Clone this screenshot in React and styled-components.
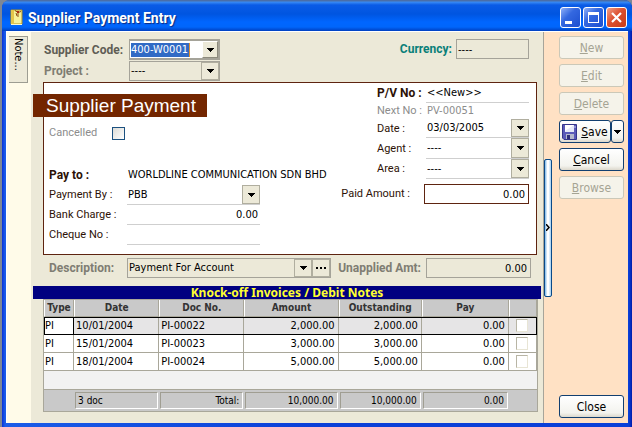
import React, { useState } from "react";
import styled, { createGlobalStyle } from "styled-components";

const GlobalStyle = createGlobalStyle`
  * {
    box-sizing: border-box;
  }
  body {
    margin: 0;
    background: #7d8796;
    font-family: "DejaVu Sans Condensed", "DejaVu Sans", sans-serif;
    font-size: 11px;
    line-height: 14px;
    color: #000;
  }
  input, select, button, output {
    font: inherit;
    color: inherit;
  }
`;

const Window = styled.div`
  display: flex;
  flex-direction: column;
  min-height: 100vh;
  margin-left: 2px;
  padding: 0 4px 4px;
  border-radius: 8px 8px 0 0;
  background: linear-gradient(90deg, #0831d9 0, #1a5ce8 3px, #0a3fd8 50%, #0a3fd8 calc(100% - 3px), #0019a8 100%);
`;

const TitleBar = styled.header`
  display: flex;
  align-items: center;
  height: 31px;
  margin: 0 -4px;
  padding: 4px 5px 0 8px;
  border-radius: 8px 8px 0 0;
  background: linear-gradient(#4a6ea8 0, #4a6ea8 1px, #3a8cf5 2px, #0a5be6 5px, #0055e0 14px, #0066ff 22px, #0066fb 27px, #0040c0 31px);
`;

const Title = styled.h1`
  flex: 1;
  margin: 0 0 0 5px;
  font-family: Roboto, sans-serif;
  font-size: 14px;
  font-weight: bold;
  line-height: 16px;
  color: #fff;
  text-shadow: 1px 1px 1px #0a2a80;
`;

const Caption = styled.button`
  display: flex;
  width: 21px;
  height: 21px;
  margin-left: 2px;
  padding: 0;
  border: 1px solid #fff;
  border-radius: 3px;
  background: ${(props) =>
    props.$close
      ? "linear-gradient(135deg, #f0a088, #dd5030 45%, #c83c18)"
      : "linear-gradient(135deg, #8fb0f8, #3468e0 40%, #1c4fd0)"};
`;

const Body = styled.div`
  display: flex;
  flex: 1;
  border-top: 1px solid #fff;
  border-left: 1px solid #fff;
  background: #ece9d8;
`;

const NoteStrip = styled.nav`
  width: 24px;
  padding: 4px 3px 0 2px;
  background: #fffbe9;
`;

const NoteTab = styled.button`
  display: block;
  width: 19px;
  height: 47px;
  padding: 1px 0 0;
  border: 1px solid #9d9d92;
  border-left: 0;
  background: #ece9d8;
  text-align: left;
  writing-mode: vertical-rl;
`;

const Main = styled.main`
  flex: 1;
  min-width: 0;
  border-right: 1px solid #a7a59a;
`;

const TopArea = styled.section`
  display: flex;
  justify-content: space-between;
  align-items: flex-start;
  padding: 7px 14px 1px 13px;
`;

const TopGrid = styled.div`
  display: grid;
  grid-template-columns: 85px 91px;
  row-gap: 1px;
  align-items: center;
`;

const Heading = styled.label`
  font-family: Roboto, sans-serif;
  font-size: 12px;
  font-weight: bold;
  color: ${(props) => props.$color || "#7f7d73"};
  white-space: nowrap;
`;

const Label = styled.label`
  font-family: Roboto, sans-serif;
  font-size: ${(props) => (props.$bold ? "12px" : "11px")};
  font-weight: ${(props) => (props.$bold ? "bold" : "normal")};
  color: ${(props) => (props.$muted ? "#8c8c8c" : "#2d1206")};
  white-space: nowrap;
`;

const Combo = styled.div`
  display: grid;
  grid-template-columns: 1fr auto;
  height: ${(props) => (props.$line ? "100%" : "20px")};
  border: ${(props) => (props.$line ? "0" : "1px solid #a5a399")};
  border-bottom: ${(props) => props.$line && "1px solid #cfcfcf"};
  background: ${(props) => (props.$line ? "#fff" : "#ece9d8")};
`;

const CodeCombo = styled.div`
  display: flex;
  justify-content: space-between;
  align-items: center;
  height: 21px;
  padding-left: 1px;
  border: 2px solid #a5a399;
  border-left-width: 1px;
  background: #fff;
`;

const CodeInput = styled.input`
  width: 59px;
  height: 14px;
  padding: 0;
  border: 0;
  border-right: 1px solid #e09030;
  outline: 0;
  background: #316ac5;
  color: #fff;
`;

const Select = styled.select`
  grid-area: 1 / 1 / 2 / 3;
  min-width: 0;
  padding: 0 0 0 1px;
  border: 0;
  outline: 0;
  background: transparent;
  appearance: none;
`;

const ArrowBox = styled.span`
  grid-area: 1 / 2 / 2 / 3;
  display: flex;
  align-items: center;
  justify-content: center;
  width: 18px;
  border: 1px solid #b0ae9f;
  background: #ece9d8;
  pointer-events: none;
`;

const ArrowButton = styled.button`
  display: flex;
  align-items: center;
  justify-content: center;
  width: 16px;
  height: 17px;
  padding: 0;
  border: 1px solid;
  border-color: #fff #8d8b7e #8d8b7e #fff;
  background: #ece9d8;
`;

const Boxed = styled.input`
  width: ${(props) => props.$width || "105px"};
  height: 20px;
  padding: 0 3px 0 1px;
  border: 1px solid ${(props) => (props.$accent ? "#5e2410" : "#a5a399")};
  outline: 0;
  background: ${(props) => (props.$accent ? "#fff" : "#ece9d8")};
  text-align: ${(props) => props.$align || "right"};
`;

const Underlined = styled.input`
  width: 100%;
  min-width: 0;
  height: 100%;
  padding: 0 2px 0 1px;
  border: 0;
  border-bottom: 1px solid #cfcfcf;
  outline: 0;
  background: transparent;
  text-align: ${(props) => props.$align || "left"};
`;

const Inline = styled.div`
  display: flex;
  align-items: center;
  gap: ${(props) => props.$gap || "4px"};
`;

const Panel = styled.section`
  display: flex;
  justify-content: space-between;
  margin: 0 6px 0 12px;
  padding: 0 7px 9px 5px;
  border: 1px solid #5e2410;
  background: #fff;
`;

const PanelLeft = styled.div`
  padding-top: 11px;
`;

const PanelRight = styled.div`
  display: flex;
  flex-direction: column;
  align-items: flex-end;
`;

const Banner = styled.h2`
  width: 174px;
  margin: 0 0 6px -16px;
  padding-left: 13px;
  background: #732600;
  font-family: "Liberation Sans", Arial, sans-serif;
  font-size: 19px;
  font-weight: normal;
  line-height: 23px;
  color: #fff;
`;

const CancelRow = styled.div`
  display: grid;
  grid-template-columns: 63px auto;
  justify-content: start;
  align-items: center;
  height: 20px;
  margin-bottom: 22px;
`;

const Check = styled.input`
  appearance: none;
  width: 13px;
  height: 13px;
  margin: 0;
  border: 1px solid #1c5180;
  background: linear-gradient(135deg, #dcdcd7, #fff);
`;

const GridCheck = styled(Check)`
  display: block;
  width: 12px;
  margin: 0 auto;
  border-color: #b8b5a5 #e8e5d5 #e8e5d5 #b8b5a5;
  background: #fff;
`;

const PayGrid = styled.div`
  display: grid;
  grid-template-columns: 78px 133px;
  grid-auto-rows: 20px;
  align-items: center;
`;

const Payee = styled.output`
  padding-left: 1px;
  white-space: nowrap;
`;

const DocGrid = styled.div`
  display: grid;
  grid-template-columns: 49px 103px;
  grid-template-rows: 20px 16px 19px 21px 20px;
  align-items: center;
  margin-bottom: 5px;
`;

const NextNo = styled.output`
  padding-left: 1px;
  color: #8c8c8c;
`;

const DescriptionRow = styled.section`
  display: grid;
  grid-template-columns: 78px minmax(204px, 2fr) minmax(95px, 1fr) 105px;
  align-items: center;
  padding: 3px 12px 8px 18px;
`;

const UnappliedHeading = styled(Heading)`
  padding-right: 5px;
  text-align: right;
`;

const DescriptionCombo = styled(Combo)`
  grid-template-columns: 1fr auto 18px;
`;

const MoreButton = styled.button`
  display: flex;
  align-items: center;
  justify-content: center;
  padding: 0;
  border: 1px solid #b0ae9f;
  background: #ece9d8;
`;

const GridTitle = styled.h3`
  height: 13px;
  margin: 0 2px;
  background: #000080;
  font-family: "Noto Sans", sans-serif;
  font-size: 12px;
  line-height: 13px;
  text-align: center;
  color: #ffff30;
`;

const TableWrap = styled.div`
  margin: 0 5px 0 12px;
`;

const Table = styled.table`
  width: 100%;
  table-layout: fixed;
  border-collapse: separate;
  border-spacing: 0;
  border: 1px solid #a9a79a;
  background: #f2f2f2;
`;

const Th = styled.th`
  height: 17px;
  padding: 0;
  border-left: 1px solid #fff;
  border-right: 1px solid #a9a79a;
  border-bottom: 1px solid #a9a79a;
  background: #c9c9c9;
  font-size: 10px;
  line-height: 12px;
  color: #333;
`;

const Td = styled.td`
  height: 18px;
  padding: 0 3px 0 ${(props) => (props.$first ? "1px" : "2px")};
  border-right: 1px solid #a9a79a;
  border-bottom: 1px solid #a9a79a;
  background: #fff;
  text-align: ${(props) => props.$align || "left"};
`;

const CurrentRow = styled.tr`
  outline: 1px solid #000;
  outline-offset: -1px;

  ${Td} {
    background: #e6e5e6;
  }
  ${Td}:first-child {
    background: #fff;
    outline: 1px solid #000;
    outline-offset: -1px;
  }
`;

const Blank = styled.td`
  height: 19px;
  padding: 0;
  border-bottom: 1px solid #a9a79a;
`;

const Total = styled.td`
  height: 21px;
  padding: 1px;
  background: #c9c9c9;
  font-size: 10px;
  line-height: 15px;
  text-align: ${(props) => props.$align || "right"};
`;

const TotalBox = styled.div`
  padding: 0 3px 0 2px;
  border: 1px solid;
  border-color: #a09e92 #fff #fff #a09e92;
`;

const Side = styled.aside`
  display: flex;
  gap: 7px;
  padding-right: 4px;
  background: #ffe1c4;
`;

const Splitter = styled.button`
  display: flex;
  align-items: center;
  justify-content: center;
  align-self: center;
  width: 8px;
  height: 138px;
  padding: 0;
  border: 1px solid #0a4a88;
  border-radius: 2px;
  background: linear-gradient(90deg, #7db8e8, #fff 40%, #fff 60%, #a0cdf0);
`;

const Actions = styled.div`
  display: flex;
  flex-direction: column;
  gap: 5px;
  width: 65px;
  padding: 4px 0 5px;
`;

const Action = styled.button`
  display: flex;
  flex: ${(props) => (props.$grow ? "1" : "none")};
  align-items: center;
  justify-content: center;
  gap: 4px;
  height: 23px;
  min-width: 0;
  padding: 0;
  border: 1px solid #123f70;
  border-radius: 3px;
  background: linear-gradient(#fff, #f3f3ee 80%, #dcd8cc);
  font-size: 12px;

  &:disabled {
    border-color: #cbc8b8;
    background: #f5f3ea;
    color: #a5a494;
  }
`;

const SplitAction = styled.div`
  display: flex;
`;

const DropAction = styled(Action)`
  width: 13px;
`;

const Spacer = styled.div`
  flex: 1;
`;

const Arrow = () => (
  <svg width="7" height="4" viewBox="0 0 7 4" shapeRendering="crispEdges">
    <path d="M0 0h7v1H6v1H5v1H4v1H3V3H2V2H1V1H0z" fill="#000" />
  </svg>
);

const DropArrow = () => (
  <ArrowBox>
    <Arrow />
  </ArrowBox>
);

const BookIcon = () => (
  <svg width="13" height="17" viewBox="0 0 13 17">
    <path d="M1 1h11v14H1z" fill="#f7f29a" stroke="#b09020" />
    <path d="M1 1h3v14H1z" fill="#e3c64a" />
    <path d="M1 15.5h11" stroke="#f8f8d0" />
    <path d="M5 1.5l3 2 3-1M8 3v5M6 4l1 3" fill="none" stroke="#8a4a10" />
    <path d="M7 2h2v2H7z" fill="#b02a10" />
  </svg>
);

const DiskIcon = () => (
  <svg width="15" height="16" viewBox="0 0 15 16">
    <path d="M.5.5h14v15H2l-1.500-1.500z" fill="#5a5ab8" stroke="#34348a" />
    <path d="M3 1h9v7H3z" fill="#e4e8f8" />
    <path d="M3 1h9L3 7z" fill="#fff" />
    <path d="M4 10h8v5H4z" fill="#b4b8cc" />
    <path d="M5 11h3v4H5z" fill="#2e2e78" />
    <path d="M13 2v2" stroke="#c0c4f0" />
  </svg>
);

const invoices = [
  { date: "10/01/2004", doc: "PI-00022", amount: "2,000.00" },
  { date: "15/01/2004", doc: "PI-00023", amount: "3,000.00" },
  { date: "18/01/2004", doc: "PI-00024", amount: "5,000.00" },
];

const columns = [
  { name: "Type", width: 30 },
  { name: "Date", width: 85 },
  { name: "Doc No.", width: 85 },
  { name: "Amount", width: 94 },
  { name: "Outstanding", width: 83 },
  { name: "Pay", width: 87 },
  { name: "", width: 28 },
];

const App = () => {
  const [code, setCode] = useState("400-W0001");
  const [cheque, setCheque] = useState("");

  return (
    <>
      <GlobalStyle />
      <Window>
        <TitleBar>
          <BookIcon />
          <Title>Supplier Payment Entry</Title>
          <Caption aria-label="Minimize">
            <svg width="19" height="19" viewBox="0 0 19 19">
              <path d="M4 13h7v3H4z" fill="#fff" />
            </svg>
          </Caption>
          <Caption aria-label="Maximize">
            <svg width="19" height="19" viewBox="0 0 19 19">
              <path d="M4 4h11v11H4zM5 7v7h9V7z" fill="#fff" fillRule="evenodd" />
            </svg>
          </Caption>
          <Caption $close aria-label="Close window">
            <svg width="19" height="19" viewBox="0 0 19 19">
              <path d="M5 5l9 9M14 5l-9 9" stroke="#fff" strokeWidth="2.200" />
            </svg>
          </Caption>
        </TitleBar>
        <Body>
          <NoteStrip>
            <NoteTab>Note...</NoteTab>
          </NoteStrip>
          <Main>
            <TopArea>
              <TopGrid>
                <Heading htmlFor="code" $color="#5f5d55">Supplier Code:</Heading>
                <CodeCombo>
                  <CodeInput
                    id="code"
                    value={code}
                    onChange={(event) => setCode(event.target.value)}
                  />
                  <ArrowButton aria-label="Choose supplier">
                    <Arrow />
                  </ArrowButton>
                </CodeCombo>
                <Heading htmlFor="project">Project :</Heading>
                <Combo>
                  <Select id="project">
                    <option>----</option>
                  </Select>
                  <DropArrow />
                </Combo>
              </TopGrid>
              <Inline>
                <Heading htmlFor="currency" $color="#0a7f78">Currency:</Heading>
                <Boxed id="currency" $width="73px" $align="left" defaultValue="----" readOnly />
              </Inline>
            </TopArea>

            <Panel>
              <PanelLeft>
                <Banner>Supplier Payment</Banner>
                <CancelRow>
                  <Label htmlFor="cancelled" $muted>Cancelled</Label>
                  <Check type="checkbox" id="cancelled" />
                </CancelRow>
                <PayGrid>
                  <Label htmlFor="payee" $bold>Pay to :</Label>
                  <Payee id="payee">WORLDLINE COMMUNICATION SDN BHD</Payee>
                  <Label htmlFor="paymentBy">Payment By :</Label>
                  <Combo $line>
                    <Select id="paymentBy">
                      <option>PBB</option>
                    </Select>
                    <DropArrow />
                  </Combo>
                  <Label htmlFor="charge">Bank Charge :</Label>
                  <Underlined id="charge" $align="right" defaultValue="0.00" />
                  <Label htmlFor="cheque">Cheque No :</Label>
                  <Underlined
                    id="cheque"
                    value={cheque}
                    onChange={(event) => setCheque(event.target.value)}
                  />
                </PayGrid>
              </PanelLeft>
              <PanelRight>
                <DocGrid>
                  <Label htmlFor="pvNo" $bold>P/V No :</Label>
                  <Underlined id="pvNo" defaultValue="<<New>>" />
                  <Label htmlFor="nextNo" $muted>Next No :</Label>
                  <NextNo id="nextNo">PV-00051</NextNo>
                  <Label htmlFor="date">Date :</Label>
                  <Combo $line>
                    <Select id="date">
                      <option>03/03/2005</option>
                    </Select>
                    <DropArrow />
                  </Combo>
                  <Label htmlFor="agent">Agent :</Label>
                  <Combo $line>
                    <Select id="agent">
                      <option>----</option>
                    </Select>
                    <DropArrow />
                  </Combo>
                  <Label htmlFor="area">Area :</Label>
                  <Combo $line>
                    <Select id="area">
                      <option>----</option>
                    </Select>
                    <DropArrow />
                  </Combo>
                </DocGrid>
                <Inline $gap="14px">
                  <Label htmlFor="paid">Paid Amount :</Label>
                  <Boxed id="paid" $accent defaultValue="0.00" />
                </Inline>
              </PanelRight>
            </Panel>

            <DescriptionRow>
              <Heading htmlFor="description">Description:</Heading>
              <DescriptionCombo>
                <Select id="description">
                  <option>Payment For Account</option>
                </Select>
                <DropArrow />
                <MoreButton aria-label="More">
                  <svg width="10" height="2" viewBox="0 0 10 2">
                    <path d="M0 0h2v2H0zM4 0h2v2H4zM8 0h2v2H8z" />
                  </svg>
                </MoreButton>
              </DescriptionCombo>
              <UnappliedHeading htmlFor="unapplied">Unapplied Amt:</UnappliedHeading>
              <Boxed id="unapplied" defaultValue="0.00" readOnly />
            </DescriptionRow>

            <GridTitle>Knock-off Invoices / Debit Notes</GridTitle>
            <TableWrap>
              <Table>
                <colgroup>
                  {columns.map((column) => (
                    <col key={column.name} width={column.width} />
                  ))}
                </colgroup>
                <thead>
                  <tr>
                    {columns.map((column) => (
                      <Th key={column.name}>{column.name}</Th>
                    ))}
                  </tr>
                </thead>
                <tbody>
                  {invoices.map((item, index) => {
                    const Row = index === 0 ? CurrentRow : "tr";
                    return (
                      <Row key={item.doc}>
                        <Td $first>PI</Td>
                        <Td>{item.date}</Td>
                        <Td>{item.doc}</Td>
                        <Td $align="right">{item.amount}</Td>
                        <Td $align="right">{item.amount}</Td>
                        <Td $align="right">0.00</Td>
                        <Td>
                          <GridCheck type="checkbox" aria-label={`Pay ${item.doc}`} />
                        </Td>
                      </Row>
                    );
                  })}
                  <tr>
                    <Blank colSpan={7} />
                  </tr>
                </tbody>
                <tfoot>
                  <tr>
                    <Total />
                    <Total $align="left"><TotalBox>3 doc</TotalBox></Total>
                    <Total><TotalBox>Total:</TotalBox></Total>
                    <Total><TotalBox>10,000.00</TotalBox></Total>
                    <Total><TotalBox>10,000.00</TotalBox></Total>
                    <Total><TotalBox>0.00</TotalBox></Total>
                    <Total />
                  </tr>
                </tfoot>
              </Table>
            </TableWrap>
          </Main>
          <Side>
            <Splitter aria-label="Collapse">
              <svg width="4" height="7" viewBox="0 0 4 7">
                <path d="M0 0l3 3.500L0 7" fill="none" stroke="#000" strokeWidth="1.500" />
              </svg>
            </Splitter>
            <Actions>
              <Action disabled><span><u>N</u>ew</span></Action>
              <Action disabled><span><u>E</u>dit</span></Action>
              <Action disabled><span><u>D</u>elete</span></Action>
              <SplitAction>
                <Action $grow><DiskIcon /><span><u>S</u>ave</span></Action>
                <DropAction aria-label="Save options"><Arrow /></DropAction>
              </SplitAction>
              <Action><span><u>C</u>ancel</span></Action>
              <Action disabled><span><u>B</u>rowse</span></Action>
              <Spacer />
              <Action>Close</Action>
            </Actions>
          </Side>
        </Body>
      </Window>
    </>
  );
};

export default App;
